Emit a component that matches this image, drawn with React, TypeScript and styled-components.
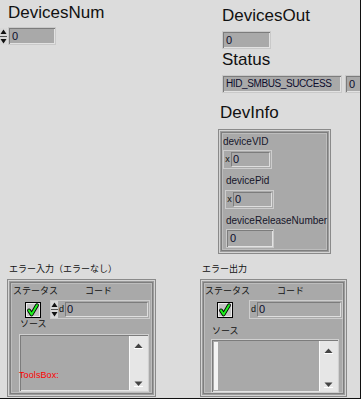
import React from "react";
import styled, { createGlobalStyle } from "styled-components";

const Global = createGlobalStyle`
  html, body { margin: 0; padding: 0; background: #dcdcdc; }
  body { font-family: "Liberation Sans", Arial, sans-serif; }
`;

const FILL = "#a9a9a9";
const BG = "#dcdcdc";

const Panel = styled.div`
  width: 361px;
  height: 399px;
  box-sizing: border-box;
  border-right: 1px solid #111;
  border-bottom: 1px solid #111;
  background: ${BG};
  overflow: hidden;
  display: flex;
  flex-direction: column;
`;

const Top = styled.div`
  display: flex;
  height: 263px;
  flex-shrink: 0;
`;

const Col = styled.div<{ $w?: number }>`
  display: flex;
  flex-direction: column;
  align-items: flex-start;
  ${(p) => (p.$w ? `width: ${p.$w}px;` : "flex: 1;")}
  flex-shrink: 0;
`;

const BigLabel = styled.div<{ $ml: number; $mt: number }>`
  font-size: 17px;
  line-height: 20px;
  height: 20px;
  color: #111;
  margin-left: ${(p) => p.$ml}px;
  margin-top: ${(p) => p.$mt}px;
  white-space: nowrap;
`;

const Row = styled.div<{ $ml?: number; $mt?: number; $gap?: number }>`
  display: flex;
  align-items: center;
  flex-shrink: 0;
  margin-left: ${(p) => p.$ml ?? 0}px;
  margin-top: ${(p) => p.$mt ?? 0}px;
  gap: ${(p) => p.$gap ?? 0}px;
`;

const NumBox = styled.div<{ $w: number; $h?: number; $ml?: number; $mt?: number; $size?: number }>`
  box-sizing: border-box;
  flex-shrink: 0;
  width: ${(p) => p.$w}px;
  height: ${(p) => p.$h ?? 18}px;
  margin-left: ${(p) => p.$ml ?? 0}px;
  margin-top: ${(p) => p.$mt ?? 0}px;
  background: ${FILL};
  border: 1px solid #c9c9c9;
  box-shadow: inset 1px 1px 0 #7c7c7c, inset -1px -1px 0 #e2e2e2;
  padding: 0 0 0 3px;
  font-size: ${(p) => p.$size ?? 11}px;
  line-height: ${(p) => (p.$h ?? 18) - 2}px;
  color: #0c0c2c;
  white-space: nowrap;
  overflow: hidden;
`;

const Cluster = styled.div<{ $w: number; $h: number; $ml?: number; $mt?: number }>`
  box-sizing: border-box;
  flex-shrink: 0;
  width: ${(p) => p.$w}px;
  height: ${(p) => p.$h}px;
  margin-left: ${(p) => p.$ml ?? 0}px;
  margin-top: ${(p) => p.$mt ?? 0}px;
  background: ${FILL};
  border: 1px solid #8a8a8a;
  box-shadow: inset 0 0 0 1px #d4d4d4, inset 0 0 0 2px #9c9c9c, inset 0 0 0 3px #7e7e7e,
    inset 0 0 0 4px #bdbdbd;
  display: flex;
  flex-direction: column;
  align-items: flex-start;
`;

const SmallLabel = styled.div<{ $ml: number; $mt: number }>`
  font-size: 10px;
  line-height: 12px;
  height: 12px;
  color: #15152a;
  margin-left: ${(p) => p.$ml}px;
  margin-top: ${(p) => p.$mt}px;
  white-space: nowrap;
`;

const RadixControl = styled.div<{ $w: number; $ml: number; $mt: number }>`
  box-sizing: border-box;
  display: flex;
  width: ${(p) => p.$w}px;
  height: 19px;
  margin-left: ${(p) => p.$ml}px;
  margin-top: ${(p) => p.$mt}px;
  border: 1px solid #cdcdcd;
  background: ${FILL};
  flex-shrink: 0;
`;

const Radix = styled.span`
  width: 7px;
  flex-shrink: 0;
  font-size: 9px;
  line-height: 17px;
  text-align: center;
  color: #111;
`;

const Field = styled.div<{ $size?: number }>`
  flex: 1;
  box-sizing: border-box;
  background: ${FILL};
  border-top: 1px solid #7c7c7c;
  border-left: 1px solid #7c7c7c;
  border-right: 1px solid #dedede;
  border-bottom: 1px solid #dedede;
  margin: 1px 1px 1px 0;
  padding-left: 1px;
  font-size: ${(p) => p.$size ?? 11}px;
  line-height: 13px;
  color: #0c0c2c;
`;

const Bottom = styled.div`
  display: flex;
  align-items: flex-start;
`;

const Group = styled.div<{ $ml: number }>`
  display: flex;
  flex-direction: column;
  align-items: flex-start;
  margin-left: ${(p) => p.$ml}px;
  flex-shrink: 0;
`;

const JpLabel = styled.div<{ $ml: number; $mt?: number }>`
  font-family: "Noto Sans CJK JP", "Liberation Sans", sans-serif;
  font-size: 9px;
  line-height: 11px;
  height: 11px;
  color: #111;
  margin-left: ${(p) => p.$ml}px;
  margin-top: ${(p) => p.$mt ?? 0}px;
  white-space: nowrap;
`;

const CheckBox = styled.div`
  width: 16px;
  height: 16px;
  flex-shrink: 0;
  display: flex;
`;

const CodeControl = styled.div<{ $w: number }>`
  box-sizing: border-box;
  display: flex;
  align-items: stretch;
  width: ${(p) => p.$w}px;
  height: 19px;
  border: 1px solid #cdcdcd;
  background: ${FILL};
  flex-shrink: 0;
`;

const ListBox = styled.div<{ $w: number; $h: number; $ml: number; $mt: number }>`
  position: relative;
  box-sizing: border-box;
  width: ${(p) => p.$w}px;
  height: ${(p) => p.$h}px;
  margin-left: ${(p) => p.$ml}px;
  margin-top: ${(p) => p.$mt}px;
  background: ${FILL};
  border: 1px solid #d0d0d0;
  box-shadow: inset 1px 1px 0 #7c7c7c, inset -1px -1px 0 #e4e4e4;
  display: flex;
  justify-content: space-between;
  padding: 1px;
  flex-shrink: 0;
`;

const TextStripe = styled.div`
  width: 4px;
  background: #f4f4f4;
  margin: 1px 0 1px 1px;
`;

const ScrollCol = styled.div`
  width: 17px;
  margin-left: auto;
  background: #e6e6e6;
  border-left: 1px solid #fafafa;
  display: flex;
  flex-direction: column;
  justify-content: space-between;
  align-items: center;
  padding: 7px 0 3px;
`;

const OverlayText = styled.div`
  position: absolute;
  left: -1px;
  top: 35px;
  font-size: 9px;
  line-height: 11px;
  color: #ff0000;
  letter-spacing: 0.1px;
`;

const Spinner = () => (
  <svg width="7" height="17" viewBox="0 0 7 17" style={{ flexShrink: 0, display: "block" }}>
    <rect x="0" y="0" width="7" height="8" fill="#d8d8d8" />
    <rect x="0" y="9" width="7" height="8" fill="#d8d8d8" />
    <line x1="0" y1="8.5" x2="7" y2="8.5" stroke="#555" />
    <polygon points="3.5,1.5 6.5,6 0.5,6" fill="#111" />
    <polygon points="0.5,11 6.5,11 3.5,15.5" fill="#111" />
  </svg>
);

const ScrollArrow = ({ down }: { down?: boolean }) => (
  <svg width="9" height="6" viewBox="0 0 9 6" style={{ display: "block" }}>
    {down ? (
      <>
        <polygon points="0.5,0.5 8.5,0.5 4.5,5" fill="#444" />
        <line x1="0" y1="5.5" x2="9" y2="5.5" stroke="#fff" />
      </>
    ) : (
      <>
        <polygon points="4.5,0.5 8.5,5 0.5,5" fill="#444" />
        <line x1="0" y1="5.5" x2="9" y2="5.5" stroke="#fff" />
      </>
    )}
  </svg>
);

const Check = () => (
  <svg width="16" height="16" viewBox="0 0 16 16" style={{ display: "block" }}>
    <rect x="0.5" y="0.5" width="15" height="15" fill="#c4c4c4" stroke="#000" />
    <rect x="1.5" y="1.5" width="13" height="13" fill="none" stroke="#ececec" />
    <path d="M4 8.4 L6.6 12.4 L12 3.2" fill="none" stroke="#000" strokeWidth="3.8" strokeLinecap="round" strokeLinejoin="round" />
    <path d="M4 8.4 L6.6 12.4 L12 3.2" fill="none" stroke="#1ff01f" strokeWidth="2" strokeLinecap="round" strokeLinejoin="round" />
  </svg>
);

type ErrProps = {
  title: string;
  titleMl: number;
  groupMl: number;
  w: number;
  withSpinner?: boolean;
  stML: number;
  cbML: number;
  cbGap: number;
  codeW: number;
  srcMl: number;
  srcMt: number;
  listMl: number;
  listMt: number;
  listW: number;
  listH: number;
  stripe?: boolean;
  overlay?: string;
};

const ErrorCluster = (p: ErrProps) => (
  <Group $ml={p.groupMl}>
    <JpLabel $ml={p.titleMl}>{p.title}</JpLabel>
    <Cluster $w={p.w} $h={118} $mt={5}>
      <Row $ml={p.stML} $mt={5} $gap={27}>
        <JpLabel $ml={0}>ステータス</JpLabel>
        <JpLabel $ml={0}>コード</JpLabel>
      </Row>
      <Row $ml={p.cbML} $mt={4} $gap={p.cbGap}>
        <CheckBox>
          <Check />
        </CheckBox>
        <CodeControl $w={p.codeW}>
          {p.withSpinner && (
            <Row $ml={0}>
              <Spinner />
            </Row>
          )}
          <Radix>d</Radix>
          <Field>0</Field>
        </CodeControl>
      </Row>
      <JpLabel $ml={p.srcMl} $mt={p.srcMt}>ソース</JpLabel>
      <ListBox $w={p.listW} $h={p.listH} $ml={p.listMl} $mt={p.listMt}>
        {p.stripe && <TextStripe />}
        <ScrollCol>
          <ScrollArrow />
          <ScrollArrow down />
        </ScrollCol>
        {p.overlay && <OverlayText>{p.overlay}</OverlayText>}
      </ListBox>
    </Cluster>
  </Group>
);

export default function App() {
  return (
    <>
      <Global />
      <Panel>
        <Top>
          <Col $w={218}>
            <BigLabel $ml={8} $mt={3}>DevicesNum</BigLabel>
            <Row $mt={4} $gap={1}>
              <Spinner />
              <NumBox $w={48}>0</NumBox>
            </Row>
          </Col>
          <Col>
            <BigLabel $ml={4} $mt={6}>DevicesOut</BigLabel>
            <NumBox $w={49} $ml={4} $mt={5}>0</NumBox>
            <BigLabel $ml={4} $mt={1}>Status</BigLabel>
            <Row $ml={4} $mt={5} $gap={3}>
              <NumBox $w={120} $size={10}>
                <span style={{ letterSpacing: "-0.4px" }}>HID_SMBUS_SUCCESS</span>
              </NumBox>
              <NumBox $w={20}>0</NumBox>
            </Row>
            <BigLabel $ml={2} $mt={10}>DevInfo</BigLabel>
            <Cluster $w={113} $h={125} $mt={6}>
              <SmallLabel $ml={4} $mt={6}>deviceVID</SmallLabel>
              <RadixControl $w={49} $ml={4} $mt={2}>
                <Radix>x</Radix>
                <Field>0</Field>
              </RadixControl>
              <SmallLabel $ml={7} $mt={6}>devicePid</SmallLabel>
              <RadixControl $w={49} $ml={6} $mt={3}>
                <Radix>x</Radix>
                <Field>0</Field>
              </RadixControl>
              <SmallLabel $ml={7} $mt={6}>deviceReleaseNumber</SmallLabel>
              <NumBox $w={48} $h={19} $ml={7} $mt={2}>0</NumBox>
            </Cluster>
          </Col>
        </Top>
        <Bottom>
          <ErrorCluster
            title="エラー入力（エラーなし）"
            titleMl={2}
            groupMl={7}
            w={149}
            withSpinner
            stML={5}
            cbML={17}
            cbGap={9}
            codeW={100}
            srcMl={12}
            srcMt={-1}
            listMl={11}
            listMt={5}
            listW={130}
            listH={58}
            overlay="ToolsBox:"
          />
          <ErrorCluster
            title="エラー出力"
            titleMl={2}
            groupMl={44}
            w={147}
            stML={4}
            cbML={16}
            cbGap={16}
            codeW={94}
            srcMl={11}
            srcMt={6}
            listMl={10}
            listMt={3}
            listW={128}
            listH={54}
            stripe
          />
        </Bottom>
      </Panel>
    </>
  );
}
